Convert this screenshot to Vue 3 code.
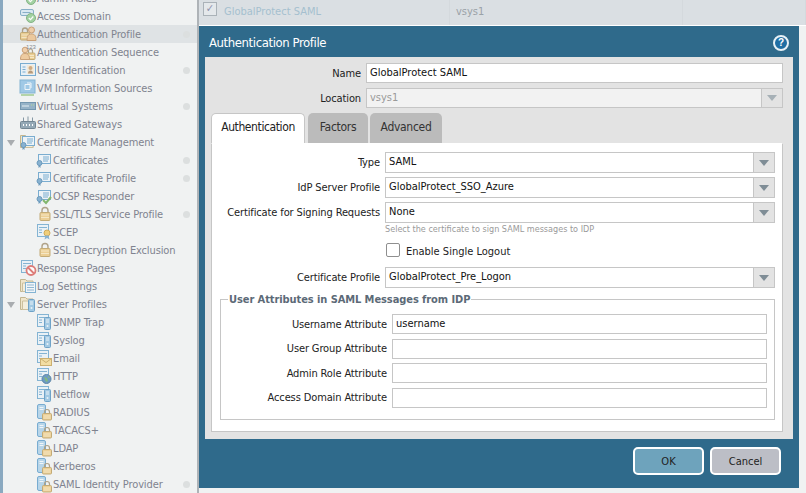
<script setup>
const nav = [
  { label: 'Admin Roles', icon: ['p-server-wide', 'p-check-big'] },
  { label: 'Access Domain', icon: ['p-server-wide', 'p-check-big'] },
  { label: 'Authentication Profile', icon: ['p-lock-left', 'p-user'], dot: true, active: true },
  { label: 'Authentication Sequence', icon: ['p-lock-right', 'p-user-left', 'p-123'] },
  { label: 'User Identification', icon: ['p-idcard'], dot: true },
  { label: 'VM Information Sources', icon: ['p-monitor'] },
  { label: 'Virtual Systems', icon: ['p-vsys'], dot: true },
  { label: 'Shared Gateways', icon: ['p-gateway'] },
  { label: 'Certificate Management', icon: ['p-folder', 'p-cert'], open: true },
  { label: 'Certificates', icon: ['p-cert'], child: true, dot: true },
  { label: 'Certificate Profile', icon: ['p-cert'], child: true, dot: true },
  { label: 'OCSP Responder', icon: ['p-cert', 'p-check'], child: true },
  { label: 'SSL/TLS Service Profile', icon: ['p-lock-mid'], child: true, dot: true },
  { label: 'SCEP', icon: ['p-doc', 'p-seal'], child: true },
  { label: 'SSL Decryption Exclusion', icon: ['p-lock-mid'], child: true },
  { label: 'Response Pages', icon: ['p-doc', 'p-ban'] },
  { label: 'Log Settings', icon: ['p-folder', 'p-page'] },
  { label: 'Server Profiles', icon: ['p-folder', 'p-server'], open: true },
  { label: 'SNMP Trap', icon: ['p-doc', 'p-server'], child: true },
  { label: 'Syslog', icon: ['p-doc', 'p-server'], child: true },
  { label: 'Email', icon: ['p-doc', 'p-mail'], child: true },
  { label: 'HTTP', icon: ['p-doc', 'p-globe'], child: true },
  { label: 'Netflow', icon: ['p-doc', 'p-server'], child: true },
  { label: 'RADIUS', icon: ['p-server-left', 'p-lock'], child: true },
  { label: 'TACACS+', icon: ['p-server-left', 'p-lock'], child: true },
  { label: 'LDAP', icon: ['p-server-left', 'p-lock'], child: true },
  { label: 'Kerberos', icon: ['p-server-left', 'p-lock'], child: true },
  { label: 'SAML Identity Provider', icon: ['p-server-left', 'p-lock'], child: true, dot: true }
]

const attributes = [
  { label: 'Username Attribute', value: 'username' },
  { label: 'User Group Attribute', value: '' },
  { label: 'Admin Role Attribute', value: '' },
  { label: 'Access Domain Attribute', value: '' }
]
</script>

<template>
  <svg class="sprite" aria-hidden="true">
    <defs>
      <g id="p-doc">
        <rect x="2.500" y="1.500" width="11" height="12" fill="#e8f1f7" stroke="#6aa5cc" />
        <path d="M4 4.500h8M4 7h3M4 9.500h3" stroke="#6aa5cc" />
      </g>
      <g id="p-page">
        <rect x="6.500" y="5.500" width="10" height="10" fill="#f1f6fa" stroke="#6aa5cc" />
        <path d="M8 8h7M8 10.500h7M8 13h7" stroke="#7aa9c9" />
      </g>
      <g id="p-cert">
        <rect x="3.500" y="3.500" width="12" height="9" fill="#edf4f9" stroke="#5d9cc8" />
        <path d="M8 6h6M8 8h6M8 10h5" stroke="#5d9cc8" />
        <circle cx="4.500" cy="12" r="2.500" fill="#6fa3c9" stroke="#4c86b0" />
        <path d="M3.500 14v3l1-1 1 1v-3" fill="#4c86b0" />
      </g>
      <g id="p-seal">
        <circle cx="12" cy="10" r="3" fill="#f0c65c" stroke="#c99a35" />
        <path d="M10.500 12.500l-1 4 2.500-1.500 2.500 1.500-1-4" fill="#6fa3c9" />
      </g>
      <g id="p-folder">
        <path d="M1.500 14.500v-12h5l1.500 1.500h6v10.500z" fill="#efe3c2" stroke="#b9a878" />
        <path d="M3.500 14.500v-8.500h10.500v8.500z" fill="#f6eed7" stroke="#c4b48a" />
      </g>
      <g id="p-server">
        <rect x="9.500" y="4.500" width="6" height="12" rx="1" fill="#8fc0e0" stroke="#4f8fbd" />
        <path d="M11 7h3M11 9h3" stroke="#e9f3f9" />
        <circle cx="12.500" cy="13" r="1" fill="#e9f3f9" />
      </g>
      <g id="p-server-left">
        <rect x="2.500" y="1.500" width="8" height="14" rx="1.500" fill="#a9cfe7" stroke="#5b9bc9" />
        <path d="M4.500 4.500h4M4.500 6.500h4" stroke="#f0f6fa" />
      </g>
      <g id="p-server-wide">
        <rect x="1.500" y="2.500" width="13" height="6" rx="1.500" fill="#d5e6f1" stroke="#6f9fbd" />
        <path d="M3.500 5.500h8" stroke="#6f9fbd" />
      </g>
      <g id="p-check-big">
        <circle cx="12" cy="11" r="4.500" fill="#8ec98e" stroke="#6aa46a" />
        <path d="M9.800 11l1.700 1.700 2.800-3.200" fill="none" stroke="#fff" stroke-width="1.200" />
      </g>
      <g id="p-check">
        <path d="M8 13l3 3 5-6" fill="none" stroke="#67a84e" stroke-width="2" />
      </g>
      <g id="p-lock">
        <path d="M9.500 11v-2a2.500 2.500 0 0 1 5 0v2" fill="none" stroke="#a08f6f" stroke-width="1.200" />
        <rect x="7.500" y="10.500" width="9" height="6.500" rx="1" fill="#ecc77f" stroke="#b99a58" />
        <path d="M8.500 13h7M8.500 15h7" stroke="#f7e5bb" />
      </g>
      <g id="p-lock-mid">
        <path d="M7 8V5.500a3 3 0 0 1 6 0V8" fill="none" stroke="#a08f6f" stroke-width="1.400" />
        <rect x="5" y="7.500" width="10" height="8" rx="1" fill="#ecc77f" stroke="#b99a58" />
        <path d="M6 10h8M6 12.500h8" stroke="#f7e5bb" />
      </g>
      <g id="p-lock-left">
        <path d="M3.500 8V5.500a2.500 2.500 0 0 1 5 0V8" fill="none" stroke="#a08f6f" stroke-width="1.300" />
        <rect x="1.500" y="7.500" width="9" height="7.500" rx="1" fill="#ecc77f" stroke="#b99a58" />
        <path d="M2.500 10h7M2.500 12.500h7" stroke="#f7e5bb" />
      </g>
      <g id="p-lock-right">
        <path d="M9.500 10V8a2 2 0 0 1 4 0v2" fill="none" stroke="#a08f6f" stroke-width="1.200" />
        <rect x="8" y="10" width="8" height="6.500" rx="1" fill="#ecc77f" stroke="#b99a58" />
        <path d="M9 12.500h6M9 14.500h6" stroke="#f7e5bb" />
      </g>
      <g id="p-user">
        <circle cx="12.500" cy="5" r="3" fill="#f1c79a" stroke="#c28f5c" />
        <path d="M8 15.500c0-5 1.500-6.500 4.500-6.500s4.500 1.500 4.500 6.500z" fill="#eec28c" stroke="#c28f5c" />
      </g>
      <g id="p-user-left">
        <circle cx="6" cy="7" r="2.800" fill="#f1c79a" stroke="#c28f5c" />
        <path d="M1.500 16.500c0-4.500 1.500-6 4.500-6s4.500 1.500 4.500 6z" fill="#eec28c" stroke="#c28f5c" />
      </g>
      <g id="p-123">
        <text x="7" y="5.500" font-size="6" font-family="Liberation Sans, sans-serif" fill="#6b7078">123</text>
      </g>
      <g id="p-idcard">
        <rect x="1.500" y="2.500" width="15" height="12" fill="#e5f0f7" stroke="#5d9cc8" />
        <path d="M3.500 6h3M3.500 8.500h3M3.500 11h3" stroke="#5d9cc8" />
        <rect x="8" y="4" width="7" height="9" fill="#f5e9d2" />
        <circle cx="11.500" cy="7" r="2" fill="#c79a68" />
        <path d="M9 12.500c0-2 1-3 2.500-3s2.500 1 2.500 3z" fill="#a98660" />
      </g>
      <g id="p-monitor">
        <rect x="1" y="1" width="15" height="13" fill="#8dc0e4" stroke="#6aa5cc" />
        <path d="M6 5.500h5v5H6zM8 4h4v5" fill="none" stroke="#eef6fb" />
        <path d="M2 16h13" stroke="#8ec07a" stroke-width="1.500" />
      </g>
      <g id="p-vsys">
        <rect x="1.500" y="5.500" width="15" height="7" fill="#7fa3bd" stroke="#54809f" />
        <path d="M3 9h7" stroke="#e4eef4" />
        <path d="M12 8h1M14 8h1" stroke="#a7d483" />
      </g>
      <g id="p-gateway">
        <path d="M4.500 6V2.500M9 6V1.500M13.500 6V2.500" stroke="#6a8191" />
        <rect x="1.500" y="6.500" width="15" height="7" rx="1" fill="#7f97a8" stroke="#566d7d" />
        <path d="M4 10h1M7 10h1M10 10h1M13 10h1" stroke="#fff" stroke-width="2" />
      </g>
      <g id="p-ban">
        <circle cx="12" cy="11.500" r="4.500" fill="#fff" stroke="#d9605c" stroke-width="1.800" />
        <path d="M9 8.500l6 6" stroke="#d9605c" stroke-width="1.800" />
      </g>
      <g id="p-mail">
        <rect x="5.500" y="9.500" width="11" height="7" fill="#f3d98f" stroke="#c4a050" />
        <path d="M5.500 9.500l5.500 4 5.500-4" fill="none" stroke="#c4a050" />
      </g>
      <g id="p-globe">
        <circle cx="11.500" cy="12" r="4.500" fill="#4d86b8" stroke="#3a6c96" />
        <path d="M9 10l3 1 1 3-2 1zM13 8.500l2 2-1.500 .5z" fill="#6bab62" />
      </g>
    </defs>
  </svg>

  <div class="page">
    <aside class="sidebar">
      <div
        v-for="item in nav"
        :key="item.label"
        class="nav_row"
        :class="{ child: item.child, active: item.active }"
      >
        <span v-if="item.open" class="tree_arrow"></span>
        <svg class="nav_icon" viewBox="0 0 18 18">
          <use v-for="part in item.icon" :key="part" :href="'#' + part" />
        </svg>
        <span class="nav_label">{{ item.label }}</span>
        <span v-if="item.dot" class="nav_dot"></span>
      </div>
    </aside>

    <main class="main">
      <div class="table_row">
        <div class="cell cell_check"><span class="row_check">✓</span></div>
        <div class="cell cell_name">GlobalProtect SAML</div>
        <div class="cell cell_location">vsys1</div>
        <div class="cell"></div>
      </div>

      <section class="dialog">
        <header class="dialog_title">
          <span>Authentication Profile</span>
          <span class="help">?</span>
        </header>

        <div class="dialog_body">
          <div class="top_row">
            <label>Name</label>
            <div class="field">GlobalProtect SAML</div>
          </div>
          <div class="top_row">
            <label>Location</label>
            <div class="select disabled">
              <span>vsys1</span>
              <span class="select_arrow"><i></i></span>
            </div>
          </div>

          <div class="tabs">
            <div class="tab current">Authentication</div>
            <div class="tab tab_factors">Factors</div>
            <div class="tab tab_advanced">Advanced</div>
          </div>

          <div class="panel">
            <div class="form_row">
              <label>Type</label>
              <div class="select"><span>SAML</span><span class="select_arrow"><i></i></span></div>
            </div>
            <div class="form_row">
              <label>IdP Server Profile</label>
              <div class="select"><span>GlobalProtect_SSO_Azure</span><span class="select_arrow"><i></i></span></div>
            </div>
            <div class="form_row">
              <label>Certificate for Signing Requests</label>
              <div class="select"><span>None</span><span class="select_arrow"><i></i></span></div>
            </div>
            <div class="form_hint">Select the certificate to sign SAML messages to IDP</div>
            <div class="form_check">
              <span class="check_box"></span>
              <span class="check_text">Enable Single Logout</span>
            </div>
            <div class="form_row">
              <label>Certificate Profile</label>
              <div class="select"><span>GlobalProtect_Pre_Logon</span><span class="select_arrow"><i></i></span></div>
            </div>

            <fieldset class="attrs">
              <legend>User Attributes in SAML Messages from IDP</legend>
              <div v-for="attr in attributes" :key="attr.label" class="attr_row">
                <label>{{ attr.label }}</label>
                <div class="field">{{ attr.value }}</div>
              </div>
            </fieldset>
          </div>
        </div>

        <footer class="dialog_footer">
          <button class="btn btn_ok">OK</button>
          <button class="btn btn_cancel">Cancel</button>
        </footer>
      </section>
    </main>
  </div>
</template>

<style>
html,
body {
  margin: 0;
  overflow: hidden;
}
</style>

<style scoped>
.sprite {
  position: absolute;
  width: 0;
  height: 0;
}

.page {
  display: flex;
  width: 806px;
  height: 493px;
  overflow: hidden;
  background: #f0f2f2;
  font-family: "DejaVu Sans Condensed", "DejaVu Sans", sans-serif;
  font-stretch: condensed;
  font-size: 11px;
  color: #222;
}

.sidebar {
  flex: none;
  box-sizing: border-box;
  width: 199px;
  height: 493px;
  overflow: hidden;
  background: #f0f2f2;
  border-left: 3px solid #8aa9c0;
  border-right: 2px solid #aeb3b7;
}

.nav_row {
  position: relative;
  display: flex;
  align-items: center;
  height: 18px;
  padding-left: 16px;
  color: #7f838f;
  font-size: 11px;
  letter-spacing: -0.12px;
  white-space: nowrap;
}

.nav_row:first-child {
  margin-top: -11px;
}

.nav_row.child {
  padding-left: 32px;
}

.nav_row.active {
  background: #dfe3e5;
}

.nav_icon {
  flex: none;
  width: 18px;
  height: 18px;
  opacity: 0.8;
}

.nav_dot {
  width: 7px;
  height: 7px;
  margin-left: auto;
  margin-right: 7px;
  border-radius: 50%;
  background: #dcdfdf;
}

.tree_arrow {
  position: absolute;
  left: 4px;
  top: 7px;
  border-style: solid;
  border-width: 6px 4.500px 0;
  border-color: #a9adb0 transparent transparent;
}

.main {
  flex: 1;
  display: flex;
  flex-direction: column;
  min-width: 0;
}

.table_row {
  flex: none;
  display: grid;
  grid-template-columns: 19px 232px 233px 1fr;
  height: 25px;
  background: #dadfe3;
  border-bottom: 1px solid #fff;
  line-height: 24px;
}

.cell {
  padding-left: 6px;
  border-right: 1px solid #d4d9dd;
}

.cell_check {
  padding: 2px 0 0 4px;
  border: 0;
}

.row_check {
  display: block;
  box-sizing: border-box;
  width: 14px;
  height: 14px;
  border: 1px solid #aab2b8;
  background: #e4e8eb;
  color: #8f93ad;
  font-size: 11px;
  line-height: 12px;
  text-align: center;
}

.cell_name {
  color: #a5bfcf;
}

.cell_location {
  color: #9aa2a8;
}

.dialog {
  flex: none;
  display: flex;
  flex-direction: column;
  width: 600px;
  height: 462px;
  background: #2f6a8b;
}

.dialog_title {
  flex: none;
  display: flex;
  align-items: center;
  justify-content: space-between;
  box-sizing: border-box;
  height: 31px;
  padding: 2px 10px 0;
  color: #fff;
  font-size: 13px;
  letter-spacing: -0.4px;
}

.help {
  width: 12px;
  height: 12px;
  border: 2px solid #e8f1f6;
  border-radius: 50%;
  background: #1f6ea3;
  color: #fff;
  font-family: "Liberation Sans", sans-serif;
  font-size: 10px;
  font-weight: bold;
  letter-spacing: 0;
  line-height: 12px;
  text-align: center;
}

.dialog_body {
  flex: none;
  box-sizing: border-box;
  height: 382px;
  margin: 0 6px;
  padding: 6px 10px 0 6px;
  background: #e3e3e3;
  font-size: 11px;
}

.top_row {
  display: grid;
  grid-template-columns: 150px 1fr;
  column-gap: 5px;
  height: 20px;
  margin-bottom: 5px;
  align-items: center;
}

label {
  text-align: right;
  color: #222;
  letter-spacing: -0.12px;
}

.field,
.select {
  box-sizing: border-box;
  height: 100%;
  border: 1px solid #c6c6c6;
  background: #fff;
  color: #111;
  line-height: 18px;
  padding-left: 3px;
}

.select {
  display: flex;
  justify-content: space-between;
}

.select_arrow {
  flex: none;
  display: flex;
  align-items: center;
  justify-content: center;
  width: 20px;
  background: #e3e3e3;
  border-left: 1px solid #c6c6c6;
}

.select_arrow i {
  border-style: solid;
  border-width: 6px 5px 0;
  border-color: #7f8d96 transparent transparent;
}

.select.disabled {
  background: #f2f2f2;
  color: #9a9a9a;
}

.select.disabled .select_arrow i {
  border-top-color: #a6b0b6;
}

.tabs {
  display: flex;
  height: 30px;
}

.tab {
  box-sizing: border-box;
  height: 30px;
  width: 60px;
  margin-right: 2px;
  padding-top: 7px;
  background: #bbb;
  border-radius: 5px 5px 0 0;
  font-size: 12px;
  letter-spacing: -0.3px;
  text-align: center;
  color: #333;
}

.tab.current {
  width: 94px;
  margin-right: 3px;
  background: #fff;
  border: 1px solid #c6c6c6;
  border-bottom: 0;
  padding-top: 6px;
  letter-spacing: -0.4px;
  color: #222;
}

.tab_advanced {
  width: 72px;
}

.panel {
  box-sizing: border-box;
  height: 289px;
  padding: 8px 7px 0 0;
  background: #fff;
  border: 1px solid #c6c6c6;
  border-top-color: #fff;
}

.form_row {
  display: grid;
  grid-template-columns: 168px 1fr;
  column-gap: 5px;
  align-items: center;
  height: 21px;
  margin-bottom: 4px;
}

.form_hint {
  margin: -5px 0 0 173px;
  height: 20px;
  color: #9a9a9a;
  font-size: 9px;
  line-height: 14px;
}

.form_check {
  display: flex;
  align-items: center;
  height: 16px;
  margin: 0 0 9px 174px;
}

.check_box {
  box-sizing: border-box;
  width: 14px;
  height: 14px;
  margin-right: 6px;
  border: 1px solid #8f8f8f;
  border-radius: 2px;
  background: #fff;
}

.check_text {
  padding-top: 2px;
}

.attrs {
  box-sizing: border-box;
  height: 127px;
  min-width: 0;
  margin: 5px 0 0 8px;
  padding: 8px 7px 0 0;
  border: 1px solid #c6c6c6;
}

.attrs legend {
  margin-left: 7px;
  padding: 0 1px;
  color: #5c6a77;
  font-size: 11px;
  font-weight: bold;
  letter-spacing: -0.08px;
}

.attr_row {
  display: grid;
  grid-template-columns: 166px 1fr;
  column-gap: 5px;
  align-items: center;
  height: 20px;
  margin-bottom: 4.600px;
}

.dialog_footer {
  flex: 1;
  display: flex;
  justify-content: flex-end;
  gap: 6px;
  padding: 8px 18px 0 0;
}

.btn {
  box-sizing: border-box;
  width: 71px;
  height: 28px;
  border: 2px solid #fff;
  border-radius: 5px;
  font-family: inherit;
  font-stretch: inherit;
  font-size: 11px;
  color: #222;
}

.btn_ok {
  background: #6ea3bc;
}

.btn_cancel {
  background: #bcbec6;
}
</style>
